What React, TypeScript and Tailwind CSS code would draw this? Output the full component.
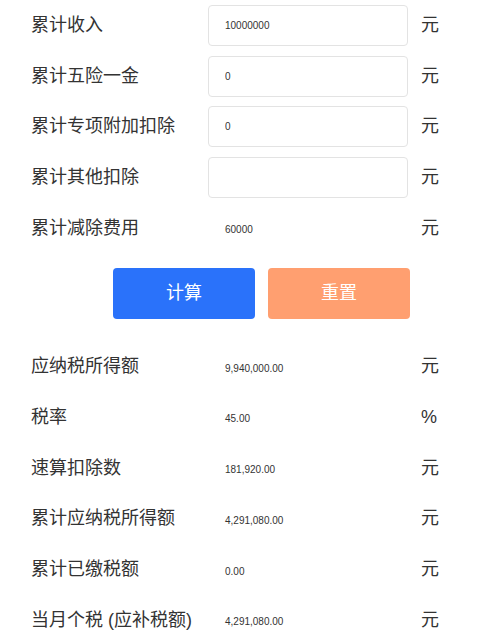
import React, { useState } from "react";

const font = "font-['Liberation_Sans','Noto_Sans_CJK_SC',sans-serif]";

const Row = ({ label, unit = "元", children }: { label: string; unit?: string; children: React.ReactNode }) => (
    <div className="flex items-center h-[50.7px]">
        <div className="w-[208px] shrink-0 pl-[31px] text-[18px] text-[#333] whitespace-nowrap">{label}</div>
        <div className="w-[200px] shrink-0">{children}</div>
        <div className="ml-[13px] text-[18px] text-[#333]">{unit}</div>
    </div>
);

const Input = ({ value }: { value: string }) => (
    <input
        defaultValue={value}
        className="w-full h-[41px] border border-[#e3e3e3] rounded-[4px] pl-[16px] text-[10px] text-[#333] bg-white focus:outline-none"
    />
);

const Value = ({ text }: { text: string }) => (
    <span className="pl-[17px] text-[10px] text-[#333]">{text}</span>
);

export default function App() {
    const [income] = useState("10000000");

    return (
        <div className={`w-[480px] h-[639px] bg-white overflow-hidden ${font}`}>
            <Row label="累计收入"><Input value={income} /></Row>
            <Row label="累计五险一金"><Input value="0" /></Row>
            <Row label="累计专项附加扣除"><Input value="0" /></Row>
            <Row label="累计其他扣除"><Input value="" /></Row>
            <Row label="累计减除费用"><Value text="60000" /></Row>

            <div className="flex gap-[13px] pl-[113px] mt-[15px]">
                <button className="w-[142px] h-[51px] rounded-[4px] bg-[#2a72fa] text-white text-[18px]">计算</button>
                <button className="w-[142px] h-[51px] rounded-[4px] bg-[#ff9f70] text-white text-[18px]">重置</button>
            </div>

            <div className="mt-[22px]">
                <Row label="应纳税所得额"><Value text="9,940,000.00" /></Row>
                <Row label="税率" unit="%"><Value text="45.00" /></Row>
                <Row label="速算扣除数"><Value text="181,920.00" /></Row>
                <Row label="累计应纳税所得额"><Value text="4,291,080.00" /></Row>
                <Row label="累计已缴税额"><Value text="0.00" /></Row>
                <Row label="当月个税 (应补税额)"><Value text="4,291,080.00" /></Row>
            </div>
        </div>
    );
}
